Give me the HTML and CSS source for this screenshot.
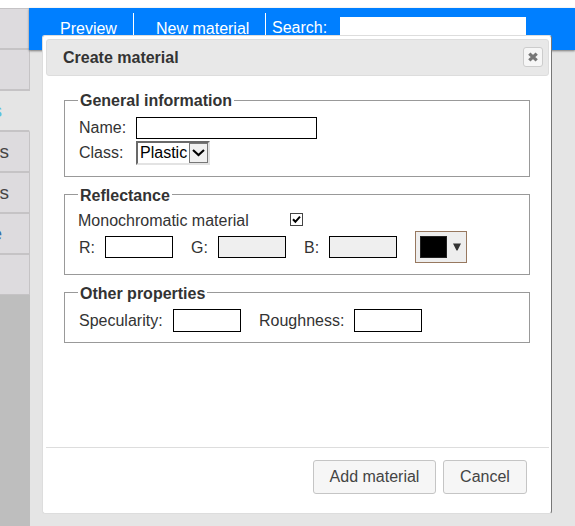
FILE: index.html
```html
<!DOCTYPE html>
<html lang="en">
<head>
<meta charset="utf-8">
<title>Create material</title>
<link rel="stylesheet" href="styles.css">
</head>
<body>
<div class="app">
  <nav class="sidebar">
    <a class="item"></a>
    <a class="item"></a>
    <a class="item active"><span class="cyan">s</span></a>
    <a class="item"><span>s</span></a>
    <a class="item"><span>s</span></a>
    <a class="item"><span class="blue">e</span></a>
    <a class="item"></a>
  </nav>
  <main class="main">
    <header class="toolbar">
      <a class="tool preview">Preview</a>
      <a class="tool new">New material</a>
      <label class="tool search">Search:</label>
      <input class="search-box" type="text">
    </header>
  </main>
</div>
<section class="dialog">
  <header class="titlebar">
    <h1>Create material</h1>
    <button class="close" aria-label="Close"><svg width="10" height="10" viewBox="0 0 10 10"><path d="M1.3 1.6L8.7 8.4M8.7 1.6L1.3 8.4" stroke="#777" stroke-width="3.3"/></svg></button>
  </header>
  <form class="form">
    <fieldset class="general">
      <legend>General information</legend>
      <div class="row name-row"><label>Name:</label><input class="wide" type="text"></div>
      <div class="row class-row"><label>Class:</label><div class="select"><span>Plastic</span><i><svg width="13" height="8" viewBox="0 0 13 8"><path d="M1 1L6.5 6L12 1" fill="none" stroke="#000" stroke-width="2.1"/></svg></i></div></div>
    </fieldset>
    <fieldset class="reflectance">
      <legend>Reflectance</legend>
      <div class="row mono-row"><label>Monochromatic material</label><span class="check"><svg width="11" height="11" viewBox="0 0 11 11"><path d="M2 5.2L4.4 7.8L9 2.6" fill="none" stroke="#000" stroke-width="2"/></svg></span></div>
      <div class="row rgb-row">
        <label class="r">R:</label><input type="text">
        <label class="g">G:</label><input class="off" type="text">
        <label class="b">B:</label><input class="off" type="text">
        <div class="picker"><span class="swatch"></span><svg width="8" height="8" viewBox="0 0 8 8"><path d="M0 .5H8L4.5 7.5H3.5Z" fill="#333"/></svg></div>
      </div>
    </fieldset>
    <fieldset class="other">
      <legend>Other properties</legend>
      <div class="row other-row"><label class="spec">Specularity:</label><input type="text"><label class="rough">Roughness:</label><input type="text"></div>
    </fieldset>
  </form>
  <footer class="actions">
    <button class="btn add" type="button">Add material</button>
    <button class="btn cancel" type="button">Cancel</button>
  </footer>
</section>
</body>
</html>
```
FILE: styles.css
```css
* { box-sizing: border-box; }
body {
  margin: 0;
  height: 526px;
  overflow: hidden;
  background: #fff;
  color: #333;
  font: 16px/18px "Liberation Sans", Arial, sans-serif;
}
.app { display: flex; height: 526px; padding-top: 8px; }
.sidebar { width: 30px; background: #bebebe; overflow: hidden; }
.item {
  display: flex;
  justify-content: flex-end;
  align-items: center;
  height: 41px;
  padding-right: 20px;
  border: solid #c5c3c5;
  border-width: 0 1px 2px 0;
  background: #dddbde;
  font-size: 19px;
  color: #444;
}
.item:first-child { height: 42px; border-top: 1px solid #c5c3c5; }
.item.active { background: #e5e5e5; border-right-color: #e5e5e5; }
.item:last-child { border-bottom-width: 1px; height: 40px; }
.item .cyan { color: #5bc0de; margin-right: 7px; }
.item .blue { color: #3a6ea5; margin-right: 7px; }
.main { flex: 1; background: #e5e5e5; }
.toolbar {
  display: flex;
  height: 42px;
  margin-left: -1px;
  padding: 5px 0 0 31px;
  background: #007fff;
  box-shadow: 0 1px 2px #777;
  color: #fff;
}
.tool { height: 30px; padding-top: 7px; white-space: nowrap; }
.preview { width: 74px; border-right: 1px solid #fff; }
.new { width: 132px; padding-left: 22px; border-right: 1px solid #fff; }
.search { width: 74px; padding: 6px 0 0 6px; }
.search-box { width: 186px; height: 28px; margin-top: 4px; border: 0; background: #fff; }
.dialog {
  position: absolute;
  left: 42px;
  top: 35px;
  width: 510px;
  height: 479px;
  padding: 3px;
  border: 1px solid #ddd;
  border-right-color: #777;
  border-radius: 3px;
  background: #fff;
}
.titlebar {
  display: flex;
  justify-content: space-between;
  height: 37px;
  padding: 7px 5px 0 16px;
  border: 1px solid #ddd;
  border-radius: 3px;
  background: #e8e8e8;
  width: 503px;
}
h1 { margin: 2px 0 0; font-size: 16px; line-height: 18px; }
.close {
  display: flex;
  align-items: center;
  justify-content: center;
  width: 20px;
  height: 20px;
  padding: 0;
  border: 1px solid #ccc;
  border-radius: 3px;
  background: #f6f6f6;
}
.form { height: 371px; padding: 15px 0 0 18px; }
fieldset {
  display: block;
  width: 466px;
  margin: 0 0 8px;
  padding: 0 0 0 13px;
  border: 1px solid #999;
}
legend { height: 18px; padding: 0 2px; font-weight: bold; line-height: 22px; }
.general { height: 86px; }
.general legend { line-height: 20px; }
.reflectance { height: 90px; }
.other { height: 60px; }
.row { display: flex; align-items: center; padding-left: 1px; white-space: nowrap; }
.row input {
  width: 68px;
  height: 22px;
  margin: 0;
  padding: 0;
  border: 1px solid #000;
  border-radius: 0;
  background: #fff;
}
.row input.wide { width: 181px; }
.row input.off { background: #efefef; }
.name-row { height: 22px; margin-top: 8px; }
.name-row label, .class-row label { width: 57px; }
.class-row { height: 24px; margin-top: 2px; }
.select {
  display: flex;
  justify-content: space-between;
  width: 74px;
  height: 24px;
  padding-left: 2px;
  border: 2px solid #696969;
  border-right-color: #e3e3e3;
  border-bottom-color: #e3e3e3;
  color: #000;
  line-height: 20px;
}
.select i {
  display: flex;
  align-items: center;
  justify-content: center;
  width: 19px;
  border: 1px solid #777;
  background: #f0f0f0;
}
.mono-row { height: 18px; margin-top: 9px; padding-left: 0; }
.mono-row label { width: 212px; }
.check { display: flex; width: 13px; height: 13px; margin-bottom: 3px; border: 1px solid #444; background: #fff; }
.rgb-row { height: 32px; margin-top: 1px; }
.rgb-row label { padding-top: 2px; }
.r { width: 26px; }
.g { width: 45px; padding-left: 18px; }
.b { width: 43px; padding-left: 18px; }
.picker {
  display: flex;
  align-items: center;
  gap: 6px;
  width: 52px;
  height: 32px;
  margin-left: 18px;
  padding-left: 4px;
  border: 1px solid #97785f;
  background: #eee;
}
.swatch { width: 27px; height: 22px; border: 1px solid #222; background: #000; }
.other-row { height: 23px; margin-top: 8px; }
.other-row input { height: 23px; }
.other-row label { padding-top: 1px; }
.spec { width: 94px; }
.rough { width: 113px; padding-left: 18px; }
.actions {
  display: flex;
  justify-content: flex-end;
  gap: 7px;
  width: 503px;
  padding: 12px 22px 0 0;
  border-top: 1px solid #ddd;
}
.btn {
  height: 34px;
  padding: 0;
  border: 1px solid #c5c5c5;
  border-radius: 3px;
  background: #f6f6f6;
  color: #444;
  font: 16px/18px "Liberation Sans", Arial, sans-serif;
}
.add { width: 123px; }
.cancel { width: 84px; }
```
